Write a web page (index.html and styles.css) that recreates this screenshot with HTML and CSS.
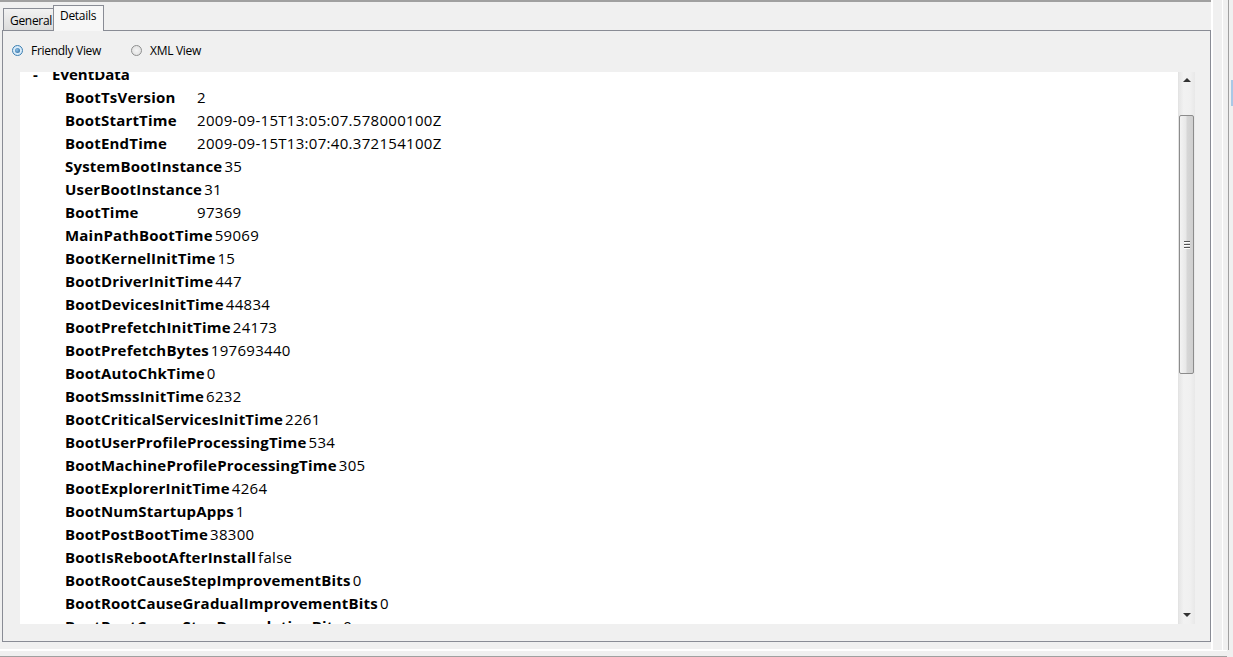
FILE: index.html
```html
<!DOCTYPE html>
<html>
<head>
<meta charset="utf-8">
<link rel="stylesheet" href="styles.css">
</head>
<body>
<div class="window">
  <div class="topline"></div>
  <div class="main">
    <div class="tabsarea">
      <div class="tabs">
        <div class="tab">General</div>
        <div class="tab active">Details</div>
      </div>
      <div class="panel">
        <div class="radios">
          <label class="radio"><span class="dot checked"></span>Friendly View</label>
          <label class="radio"><span class="dot"></span>XML View</label>
        </div>
        <div class="viewer">
          <div class="content">
            <div class="inner">
              <div class="section"><span class="minus">-</span><span class="sect">EventData</span></div>
              <div class="row"><span class="k">BootTsVersion</span><span class="v">2</span></div>
              <div class="row"><span class="k">BootStartTime</span><span class="v">2009-09-15T13:05:07.578000100Z</span></div>
              <div class="row"><span class="k">BootEndTime</span><span class="v">2009-09-15T13:07:40.372154100Z</span></div>
              <div class="row"><span class="k">SystemBootInstance</span><span class="v">35</span></div>
              <div class="row"><span class="k">UserBootInstance</span><span class="v">31</span></div>
              <div class="row"><span class="k">BootTime</span><span class="v">97369</span></div>
              <div class="row"><span class="k">MainPathBootTime</span><span class="v">59069</span></div>
              <div class="row"><span class="k">BootKernelInitTime</span><span class="v">15</span></div>
              <div class="row"><span class="k">BootDriverInitTime</span><span class="v">447</span></div>
              <div class="row"><span class="k">BootDevicesInitTime</span><span class="v">44834</span></div>
              <div class="row"><span class="k">BootPrefetchInitTime</span><span class="v">24173</span></div>
              <div class="row"><span class="k">BootPrefetchBytes</span><span class="v">197693440</span></div>
              <div class="row"><span class="k">BootAutoChkTime</span><span class="v">0</span></div>
              <div class="row"><span class="k">BootSmssInitTime</span><span class="v">6232</span></div>
              <div class="row"><span class="k">BootCriticalServicesInitTime</span><span class="v">2261</span></div>
              <div class="row"><span class="k">BootUserProfileProcessingTime</span><span class="v">534</span></div>
              <div class="row"><span class="k">BootMachineProfileProcessingTime</span><span class="v">305</span></div>
              <div class="row"><span class="k">BootExplorerInitTime</span><span class="v">4264</span></div>
              <div class="row"><span class="k">BootNumStartupApps</span><span class="v">1</span></div>
              <div class="row"><span class="k">BootPostBootTime</span><span class="v">38300</span></div>
              <div class="row"><span class="k">BootIsRebootAfterInstall</span><span class="v">false</span></div>
              <div class="row"><span class="k">BootRootCauseStepImprovementBits</span><span class="v">0</span></div>
              <div class="row"><span class="k">BootRootCauseGradualImprovementBits</span><span class="v">0</span></div>
              <div class="row"><span class="k">BootRootCauseStepDegradationBits</span><span class="v">0</span></div>
            </div>
          </div>
          <div class="scrollbar">
            <div class="arrow up"></div>
            <div class="track">
              <div class="thumb"><div class="grip"><i></i><i></i><i></i></div></div>
            </div>
            <div class="arrow down"></div>
          </div>
        </div>
      </div>
    </div>
    <div class="rightedge">
      <div class="blue"></div>
    </div>
  </div>
  <div class="bottomlines"></div>
</div>
</body>
</html>
```
FILE: styles.css
```css
* { box-sizing: border-box; }
html, body { margin: 0; padding: 0; }
body {
  width: 1233px;
  height: 657px;
  overflow: hidden;
  background: #f0f0f0;
  font-family: "Segoe UI", "Open Sans", "Noto Sans", sans-serif;
  color: #000;
}
.window { width: 1233px; height: 657px; display: flex; flex-direction: column; }
.topline { height: 2px; width: 1217px; background: #a0a0a0; flex: none; }
.main { display: flex; flex: none; height: 640px; }
.tabsarea { width: 1211px; padding: 3px 0 0 2px; flex: none; display: flex; flex-direction: column; min-height: 0; }
.tabs { display: flex; align-items: flex-end; height: 25px; flex: none; position: relative; z-index: 1; padding-left: 1px; }
.tab {
  font-size: 12px;
  line-height: 16px;
  height: 22px;
  padding: 4px 0 0 6px;
  border: 1px solid #898c95;
  border-bottom: none;
  background: linear-gradient(#f2f2f2, #dcdcdc);
  color: #000;
  width: 51px;
  letter-spacing: -0.3px;
}
.tab.active {
  width: 51px;
  margin-left: -1px;
  padding-top: 2px;
  padding-left: 6px;
  margin-bottom: -1px;
  height: 26px;
  background: #f7f7f7;
}
.panel {
  flex: 1;
  min-height: 0;
  border: 1px solid #898c95;
  background: #f0f0f0;
  display: flex;
  flex-direction: column;
  padding: 0 15px 17px 17px;
}
.radios { display: flex; height: 41px; align-items: center; margin-left: -8px; padding-bottom: 2px; flex: none; }
.radio { display: flex; align-items: center; font-size: 12px; margin-right: 30px; letter-spacing: -0.3px; }
.dot {
  width: 11px; height: 11px; border-radius: 50%;
  border: 1px solid #8e8f8f;
  background: radial-gradient(#f4f4f4, #dcdcdc);
  margin-right: 8px;
  position: relative;
}
.dot.checked { border-color: #3c7fb1; background: radial-gradient(#e8f4fc, #cce4f7); }
.dot.checked::after {
  content: ""; position: absolute; left: 2px; top: 2px; width: 5px; height: 5px; border-radius: 50%;
  background: radial-gradient(circle at 40% 40%, #8fc2ea, #1d5d92);
}
.viewer { flex: 1; display: flex; min-height: 0; }
.content { flex: 1; background: #fff; overflow: hidden; }
.inner { margin-top: -10px; }
.section { height: 23px; display: flex; align-items: center; font-weight: bold; font-size: 15px; }
.minus { margin-left: 13px; width: 19px; }
.row { height: 23px; display: flex; align-items: center; padding-left: 45px; font-size: 15px; white-space: nowrap; letter-spacing: 0.3px; }
.k { font-weight: bold; min-width: 132px; padding-right: 2px; letter-spacing: 0.2px; }
.scrollbar {
  width: 17px; flex: none; display: flex; flex-direction: column;
  background: linear-gradient(90deg, #e6e6e6, #f2f2f2 30%, #f0f0f0 70%, #e8e8e8);
  border-left: 1px solid #e3e3e3;
}
.arrow { height: 17px; flex: none; position: relative; }
.arrow::after {
  content: ""; position: absolute; left: 4px; width: 0; height: 0;
  border-left: 4px solid transparent; border-right: 4px solid transparent;
}
.arrow.up::after { top: 6px; border-bottom: 4px solid #333; }
.arrow.down::after { top: 6px; border-top: 4px solid #333; }
.track { flex: 1; padding-top: 26px; }
.thumb {
  height: 259px; margin: 0 1px 0 0;
  border: 1px solid #8c8c8c; border-radius: 2px;
  background: linear-gradient(90deg, #f3f3f3, #e8e8e8 45%, #d6d6d6 55%, #cfcfcf);
  display: flex; align-items: center; justify-content: center;
}
.grip { display: flex; flex-direction: column; gap: 1px; }
.grip i { display: block; width: 6px; height: 1px; background: #555; border-bottom: 1px solid #fff; box-sizing: content-box; }
.rightedge {
  flex: none; width: 22px; height: 650px; margin-top: -2px;
  border-left: 2px solid #fff;
  position: relative;
  background:
    linear-gradient(90deg, #f0f0f0 0 9px, #ffffff 9px 10px, #f0f0f0 10px 15px, #a0a0a0 15px 16px, #f0f0f0 16px);
}
.blue { position: absolute; left: 18px; top: 80px; width: 4px; height: 26px; background: #a9c8e6; }
.bottomlines {
  height: 15px; width: 1227px; flex: none;
  background: linear-gradient(#f0f0f0 0 7px, #ffffff 7px 9px, #f0f0f0 9px 14px, #a0a0a0 14px 15px);
}
```
